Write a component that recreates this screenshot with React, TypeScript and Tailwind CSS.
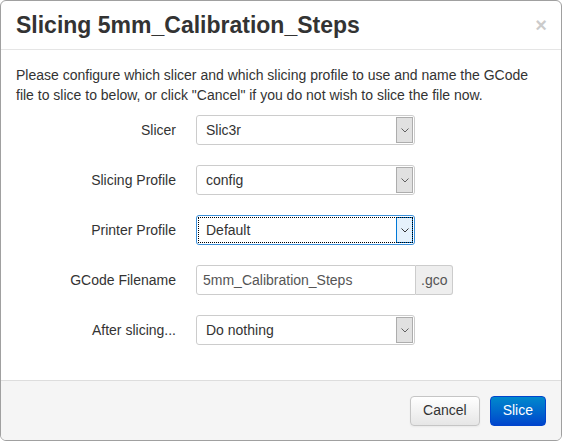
import { FC, ReactNode } from "react";

const Chevron: FC<{ color?: string }> = ({ color = "#555" }) => (
  <svg width="8" height="5" viewBox="0 0 8 5" fill="none">
    <path d="M0.5 0.5 L4 4 L7.5 0.5" stroke={color} strokeWidth="1" />
  </svg>
);

const FakeSelect: FC<{ value: string; focused?: boolean }> = ({ value, focused }) => (
  <div
    className={`relative flex h-[30px] w-[219px] items-stretch rounded-[3px] border bg-white ${
      focused ? "border-[#3b8fd9]" : "border-[#cccccc]"
    }`}
  >
    {focused && (
      <div className="pointer-events-none absolute inset-[1px] border border-dotted border-black" />
    )}
    <div className="flex flex-1 items-center pl-[9px] text-[14px] text-[#333]">{value}</div>
    <div
      className={`my-[1px] mr-[1px] flex w-[17px] items-center justify-center border ${
        focused ? "border-[#0078d7] bg-[#e5f1fb]" : "border-[#adadad] bg-[#e1e1e1]"
      }`}
    >
      <Chevron color={focused ? "#333" : "#606060"} />
    </div>
  </div>
);

const Row: FC<{ label: string; children: ReactNode }> = ({ label, children }) => (
  <div className="mb-5 flex items-center">
    <label className="w-[160px] pr-0 text-right text-[14px] text-[#333]">{label}</label>
    <div className="ml-5">{children}</div>
  </div>
);

export default function App() {
  return (
    <div
      className="flex h-[441px] w-[562px] flex-col overflow-hidden rounded-[6px] border border-[#a0a0a0] bg-white"
      style={{ fontFamily: '"Liberation Sans", Arial, sans-serif' }}
    >
      {/* Header */}
      <div className="flex h-[49px] shrink-0 items-center justify-between border-b border-[#e5e5e5] pl-[15px] pr-[14px]">
        <h3 className="text-[23px] font-bold leading-[30px] text-[#333]">
          Slicing 5mm_Calibration_Steps
        </h3>
        <span className="text-[20px] font-bold leading-none text-black opacity-20">×</span>
      </div>

      {/* Body */}
      <div className="flex-1 px-[15px] pt-[15px]">
        <p className="mb-[10px] text-[14px] leading-[20px] text-[#333]">
          Please configure which slicer and which slicing profile to use and name the GCode file
          to slice to below, or click "Cancel" if you do not wish to slice the file now.
        </p>
        <Row label="Slicer">
          <FakeSelect value="Slic3r" />
        </Row>
        <Row label="Slicing Profile">
          <FakeSelect value="config" />
        </Row>
        <Row label="Printer Profile">
          <FakeSelect value="Default" focused />
        </Row>
        <Row label="GCode Filename">
          <div className="flex h-[30px]">
            <div className="flex w-[220px] items-center rounded-l-[3px] border border-[#cccccc] bg-white pl-[6px] text-[14px] text-[#555]">
              5mm_Calibration_Steps
            </div>
            <div className="flex items-center rounded-r-[3px] border border-l-0 border-[#cccccc] bg-[#eeeeee] px-[5px] text-[14px] text-[#555]">
              .gco
            </div>
          </div>
        </Row>
        <Row label="After slicing...">
          <FakeSelect value="Do nothing" />
        </Row>
      </div>

      {/* Footer */}
      <div className="flex h-[60px] shrink-0 items-center justify-end gap-[10px] border-t border-[#dddddd] bg-[#f5f5f5] px-[15px]">
        <button className="h-[30px] rounded-[4px] border border-[#c5c5c5] bg-gradient-to-b from-white to-[#e6e6e6] px-[12px] text-[14px] text-[#333] shadow-[inset_0_1px_0_rgba(255,255,255,0.2),0_1px_2px_rgba(0,0,0,0.05)]">
          Cancel
        </button>
        <button className="h-[30px] rounded-[4px] border border-[#0044cc] bg-gradient-to-b from-[#0088cc] to-[#0044cc] px-[12px] text-[14px] text-white">
          Slice
        </button>
      </div>
    </div>
  );
}
